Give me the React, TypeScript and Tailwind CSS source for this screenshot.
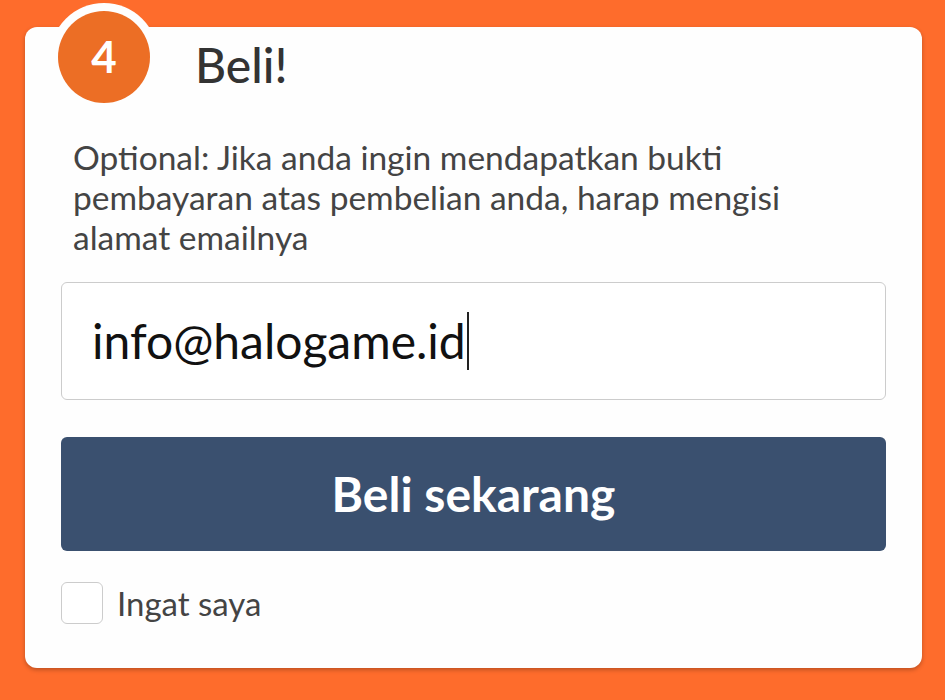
import { useState } from "react";

const App = () => {
    const [remember, setRemember] = useState(false);

    return (
        <div className="min-h-[700px] w-full bg-[#fe6c2c] pl-[25px] pr-[23px] pt-[27px] pb-8 font-['Lato',sans-serif]">
            <div className="relative w-full rounded-[12px] bg-[#fefefe] px-[36px] pt-[10px] pb-[44px] shadow-[0_2px_4px_rgba(0,0,0,0.25)]">
                {/* step badge */}
                <div className="absolute left-[25px] top-[-24px] flex h-[108px] w-[108px] items-center justify-center rounded-full bg-[#fefefe]">
                    <div className="flex h-[92px] w-[92px] items-center justify-center rounded-full bg-[#ec6e25] pb-[2px] text-[44px] font-bold leading-none text-white">
                        4
                    </div>
                </div>

                <h2 className="ml-[134px] text-[48px] font-medium leading-[56px] text-[#333333]">Beli!</h2>

                <p className="mt-[44px] pl-[12px] pr-[20px] text-[33.5px] leading-[40px] text-[#444444]">
                    Optional: Jika anda ingin mendapatkan bukti pembayaran atas pembelian anda, harap mengisi alamat emailnya
                </p>

                <div className="mt-[25px] flex h-[118px] w-full items-center rounded-[6px] border border-[#cccccc] bg-white pl-[30px]">
                    <span className="text-[48px] leading-none text-[#111111]">info@halogame.id</span>
                    <span className="ml-[1px] h-[58px] w-[2px] bg-[#222222]" />
                </div>

                <button className="mt-[37px] flex h-[114px] w-full items-center justify-center rounded-[6px] bg-[#3a506f] text-[48px] font-bold text-white">
                    Beli sekarang
                </button>

                <label className="mt-[31px] flex items-center gap-[14px]">
                    <button
                        onClick={() => setRemember(!remember)}
                        className="h-[42px] w-[42px] rounded-[6px] border border-[#cccccc] bg-white"
                    >
                        {remember && <span className="text-[28px] text-[#3a506f]">✓</span>}
                    </button>
                    <span className="text-[33px] leading-none text-[#444444]">Ingat saya</span>
                </label>
            </div>
        </div>
    );
};

export default App;
